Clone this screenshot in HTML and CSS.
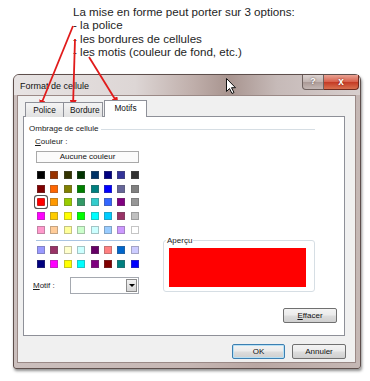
FILE: index.html
```html
<!DOCTYPE html>
<html lang="fr">
<head>
<meta charset="utf-8">
<title>Format de cellule</title>
<link rel="stylesheet" href="styles.css">
</head>
<body>
<div class="caption">
  <div>La mise en forme peut porter sur 3 options:</div>
  <div>- la police</div>
  <div>- les bordures de cellules</div>
  <div>- les motis (couleur de fond, etc.)</div>
</div>

<div class="dialog">
  <div class="titlebar">
    <span class="title">Format de cellule</span>
    <div class="caps">
      <span class="cap help">?</span>
      <span class="cap close">x</span>
    </div>
  </div>
  <div class="client">
    <div class="tabs">
      <div class="tab">Police</div>
      <div class="tab">Bordure</div>
      <div class="tab active">Motifs</div>
    </div>
    <div class="panel">
      <div class="group-title"><span>Ombrage de cellule</span><span class="rule"></span></div>
      <div class="cols">
        <div class="left">
          <div class="label"><u>C</u>ouleur :</div>
          <div class="btn none">Aucune couleur</div>
          <div class="grid main">
            <i style="background:#000000"></i><i style="background:#993300"></i><i style="background:#333300"></i><i style="background:#003300"></i><i style="background:#003366"></i><i style="background:#000080"></i><i style="background:#333399"></i><i style="background:#333333"></i>
            <i style="background:#800000"></i><i style="background:#ff6600"></i><i style="background:#808000"></i><i style="background:#008000"></i><i style="background:#008080"></i><i style="background:#0000ff"></i><i style="background:#666699"></i><i style="background:#808080"></i>
            <i class="sel" style="background:#ff0000"></i><i style="background:#ff9900"></i><i style="background:#99cc00"></i><i style="background:#339966"></i><i style="background:#33cccc"></i><i style="background:#3366ff"></i><i style="background:#800080"></i><i style="background:#969696"></i>
            <i style="background:#ff00ff"></i><i style="background:#ffcc00"></i><i style="background:#ffff00"></i><i style="background:#00ff00"></i><i style="background:#00ffff"></i><i style="background:#00ccff"></i><i style="background:#993366"></i><i style="background:#c0c0c0"></i>
            <i style="background:#ff99cc"></i><i style="background:#ffcc99"></i><i style="background:#ffff99"></i><i style="background:#ccffcc"></i><i style="background:#ccffff"></i><i style="background:#99ccff"></i><i style="background:#cc99ff"></i><i style="background:#ffffff"></i>
          </div>
          <div class="sep"></div>
          <div class="grid">
            <i style="background:#9999ff"></i><i style="background:#993366"></i><i style="background:#ffffcc"></i><i style="background:#ccffff"></i><i style="background:#660066"></i><i style="background:#ff8080"></i><i style="background:#0066cc"></i><i style="background:#ccccff"></i>
            <i style="background:#000080"></i><i style="background:#ff00ff"></i><i style="background:#ffff00"></i><i style="background:#00ffff"></i><i style="background:#800080"></i><i style="background:#800000"></i><i style="background:#008080"></i><i style="background:#0000ff"></i>
          </div>
          <div class="motif">
            <span class="motif-label"><u>M</u>otif :</span>
            <div class="select"><span class="drop"><span class="tri"></span></span></div>
          </div>
        </div>
        <div class="right">
          <div class="preview-box">
            <span class="legend">Aperçu</span>
            <div class="preview"></div>
          </div>
          <div class="btn clear"><u>E</u>ffacer</div>
        </div>
      </div>
    </div>
    <div class="actions">
      <div class="btn ok">OK</div>
      <div class="btn cancel">Annuler</div>
    </div>
  </div>
</div>

<svg class="overlay" width="370" height="381" viewBox="0 0 370 381">
  <defs>
    <marker id="ah" markerWidth="8" markerHeight="7" refX="7" refY="3.5" orient="auto" markerUnits="userSpaceOnUse">
      <path d="M0,0 L8,3.5 L0,7 Z" fill="#e11b1b"/>
    </marker>
  </defs>
  <g stroke="#e11b1b" stroke-width="1.8" fill="none" marker-end="url(#ah)">
    <line x1="73" y1="26" x2="40" y2="107"/>
    <line x1="75" y1="39" x2="73" y2="107"/>
    <line x1="89" y1="57" x2="118" y2="104"/>
  </g>
  <path d="M226.5,78.5 L226.5,91.5 L229.5,88.5 L232,93.5 L234,92.5 L231.5,87.7 L235.5,87.7 Z" fill="#fff" stroke="#111" stroke-width="1" stroke-linejoin="round"/>
</svg>
</body>
</html>
```

FILE: styles.css
```css
html, body {
  margin: 0;
  padding: 0;
}
body {
  width: 370px;
  height: 381px;
  background: #ffffff;
  position: relative;
  overflow: hidden;
  font-family: "Liberation Sans", Arial, sans-serif;
  color: #1a1a1a;
}

.caption {
  padding-top: 5px;
  margin-left: 73px;
  font-size: 11.6px;
  line-height: 13.3px;
  color: #1e1e1e;
}

.dialog {
  box-sizing: border-box;
  margin: 16px 0 0 13px;
  width: 348px;
  height: 295px;
  border: 1px solid #5e4f4c;
  border-radius: 6px 6px 3px 3px;
  padding: 0 4px 5px 3px;
  background: linear-gradient(to right, #cbbfbd 0%, #c6b7b4 50%, #b9a7a3 70%, #c5b8b5 100%);
  box-shadow: 1px 2px 3px rgba(0, 0, 0, 0.45);
  font-size: 8px;
}

.titlebar {
  height: 20px;
  margin: 0 -4px 0 -3px;
  padding: 0 3px 0 6px;
  display: flex;
  align-items: flex-start;
  border-radius: 5px 5px 0 0;
  background: linear-gradient(to right, #e7e3e3 0%, #ddd6d5 35%, #bfaeaa 52%, #a8948f 62%, #c6bab8 76%, #d7cecd 100%);
}
.title {
  font-size: 9px;
  line-height: 11px;
  margin-top: 6px;
  color: #111;
}
.caps {
  margin-left: auto;
  margin-right: -2px;
  display: flex;
}
.cap {
  box-sizing: border-box;
  height: 15px;
  line-height: 13px;
  text-align: center;
  font-weight: bold;
  color: #fff;
}
.help {
  width: 22px;
  border: 1px solid #6f625f;
  border-top: 0;
  border-radius: 0 0 0 4px;
  background: linear-gradient(#dcd3d1 0%, #c2b5b2 48%, #ab9a96 52%, #c4b7b4 100%);
  font-size: 9px;
  text-shadow: 0 0 2px #4a3c3a;
}
.close {
  width: 35px;
  border: 1px solid #6e2a1f;
  border-top: 0;
  border-left: 0;
  border-radius: 0 0 4px 0;
  background: linear-gradient(#e9a394 0%, #d8614d 48%, #c43a24 52%, #d8704f 100%);
  font-size: 10px;
  text-shadow: 0 0 2px #6e1a10;
}

.client {
  box-sizing: border-box;
  height: 268px;
  border: 1px solid #9a8986;
  background: #f0f0f0;
  padding: 5px 9px 0 5px;
}

.tabs {
  display: flex;
  align-items: flex-end;
  height: 16px;
  padding-left: 2px;
  position: relative;
  z-index: 1;
  margin-bottom: -1px;
}
.tab {
  box-sizing: border-box;
  height: 15px;
  padding: 0 6px;
  line-height: 14px;
  border: 1px solid #8e9098;
  border-bottom: 0;
  background: linear-gradient(#f4f4f4, #e1e1e1);
  color: #111;
  font-size: 8.3px;
}
.tab + .tab {
  margin-left: -1px;
}
.tab:first-child {
  width: 39px;
  text-align: center;
}
.tab:nth-child(2) {
  width: 40px;
  text-align: center;
}
.tab.active {
  height: 17px;
  width: 43px;
  text-align: center;
  margin: 0 0 0 1px;
  background: #ffffff;
  line-height: 15px;
  padding-bottom: 1px;
}

.panel {
  box-sizing: border-box;
  height: 220px;
  width: 322px;
  border: 1px solid #8e9098;
  background: #ffffff;
  padding: 7px 0 0 5px;
}

.group-title {
  display: flex;
  align-items: center;
  line-height: 10px;
  margin-right: 29px;
}
.rule {
  flex: 1;
  height: 1px;
  background: #d6dee4;
  margin-left: 3px;
  margin-top: 1px;
}

.cols {
  display: flex;
  margin-top: 3px;
}
.left {
  width: 105px;
  margin-left: 6px;
}
.label {
  line-height: 10px;
}
u {
  text-decoration: underline;
  text-underline-offset: 1px;
}

.btn {
  box-sizing: border-box;
  height: 15px;
  border: 1px solid #707070;
  border-radius: 2px;
  background: linear-gradient(#f3f3f3 0%, #ebebeb 48%, #dddddd 52%, #cfcfcf 100%);
  text-align: center;
  line-height: 13px;
  color: #111;
}
.none {
  width: 103px;
  height: 12px;
  line-height: 10px;
  margin: 4px 0 0 1px;
  border-color: #a9a9a9;
  border-radius: 0;
  background: #fbfbfb;
}

.grid {
  display: grid;
  grid-template-columns: repeat(8, 8px);
  column-gap: 5.4px;
  row-gap: 5.6px;
  margin-left: 2px;
}
.grid.main {
  margin-top: 8px;
}
.grid i {
  display: block;
  box-sizing: border-box;
  width: 8px;
  height: 8px;
  border: 1px solid rgba(90, 90, 90, 0.35);
}
.grid i.sel {
  border-radius: 1px;
  box-shadow: 0 0 0 2px #ffffff, 0 0 0 3px #555555;
}
.sep {
  height: 1px;
  margin: 6px 0 5.5px 1px;
  background: #a9c4e2;
}

.motif {
  display: flex;
  align-items: center;
  margin: 9.5px 0 0 -2px;
}
.motif-label {
  width: 37px;
  line-height: 10px;
}
.select {
  box-sizing: border-box;
  width: 69px;
  height: 17px;
  border: 1px solid #a5a9b0;
  background: #ffffff;
  display: flex;
  justify-content: flex-end;
  padding: 1px;
}
.drop {
  box-sizing: border-box;
  width: 11px;
  height: 13px;
  border: 1px solid #8b8b8b;
  background: linear-gradient(#f2f2f2, #d6d6d6);
  display: flex;
  align-items: center;
  justify-content: center;
}
.tri {
  width: 0;
  height: 0;
  border-left: 3px solid transparent;
  border-right: 3px solid transparent;
  border-top: 3px solid #000;
}

.right {
  margin-left: 23px;
}
.preview-box {
  position: relative;
  box-sizing: border-box;
  width: 152px;
  height: 52px;
  margin-top: 103px;
  border: 1px solid #d6dee4;
  border-radius: 3px;
  padding: 7px 0 0 5px;
}
.legend {
  position: absolute;
  top: -5px;
  left: 2px;
  background: #ffffff;
  line-height: 10px;
  padding: 0 1px;
}
.preview {
  width: 137px;
  height: 39px;
  background: #ff0000;
}
.clear {
  width: 54px;
  margin: 16px 0 0 120px;
}

.actions {
  display: flex;
  justify-content: flex-end;
  gap: 7px;
  margin-top: 8px;
}
.ok {
  width: 53px;
  border-color: #3c7fb1;
  box-shadow: inset 0 0 0 1px #b6e0f5;
}
.cancel {
  width: 54px;
}

.overlay {
  position: absolute;
  left: 0;
  top: 0;
  pointer-events: none;
}
```
